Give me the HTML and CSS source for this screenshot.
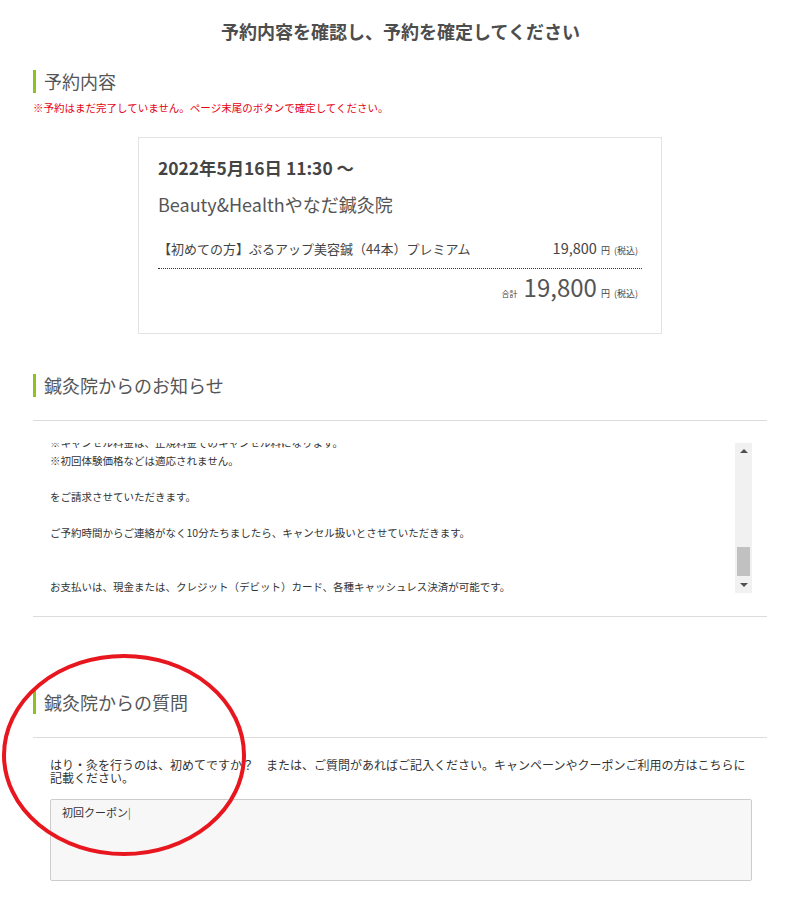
FILE: index.html
```html
<!DOCTYPE html>
<html lang="ja">
<head>
<meta charset="utf-8">
<title>予約内容を確認し、予約を確定してください</title>
<link rel="stylesheet" href="styles.css">
</head>
<body>
<div class="page">
  <h1 class="title">予約内容を確認し、予約を確定してください</h1>

  <h2 class="sec-head first">予約内容</h2>
  <p class="note">※予約はまだ完了していません。ページ末尾のボタンで確定してください。</p>

  <div class="card">
    <div class="date">2022年5月16日 11:30 ～</div>
    <div class="shop">Beauty&amp;Healthやなだ鍼灸院</div>
    <div class="item-row">
      <span class="item-name">【初めての方】ぷるアップ美容鍼（44本）プレミアム</span>
      <span class="item-price"><span class="num">19,800</span><span class="yen">円</span><span class="tax">(税込)</span></span>
    </div>
    <div class="total-row">
      <span class="total-label">合計</span><span class="total-num">19,800</span><span class="yen">円</span><span class="tax">(税込)</span>
    </div>
  </div>

  <h2 class="sec-head second">鍼灸院からのお知らせ</h2>
  <hr class="rule rule-a">
  <div class="notice">
    <div class="notice-view">
      <div class="notice-text">
        <p>※キャンセル料金は、正規料金でのキャンセル料になります。</p>
        <p>※初回体験価格などは適応されません。</p>
        <p>&nbsp;</p>
        <p>をご請求させていただきます。</p>
        <p>&nbsp;</p>
        <p>ご予約時間からご連絡がなく10分たちましたら、キャンセル扱いとさせていただきます。</p>
        <p>&nbsp;</p>
        <p>&nbsp;</p>
        <p>お支払いは、現金または、クレジット（デビット）カード、各種キャッシュレス決済が可能です。</p>
        <p>&nbsp;</p>
      </div>
    </div>
    <div class="scrollbar">
      <span class="arrow up"></span>
      <span class="track"><span class="thumb"></span></span>
      <span class="arrow down"></span>
    </div>
  </div>
  <hr class="rule rule-b">

  <h2 class="sec-head third">鍼灸院からの質問</h2>
  <hr class="rule rule-c">
  <p class="question">はり・灸を行うのは、初めてですか？　または、ご質問があればご記入ください。キャンペーンやクーポンご利用の方はこちらに記載ください。</p>
  <div class="answer">初回クーポン<span class="caret">|</span></div>

  <svg class="circle-mark" width="250" height="210" viewBox="0 0 250 210" aria-hidden="true">
    <ellipse cx="124" cy="102" rx="120" ry="99" fill="none" stroke="#e8161e" stroke-width="4"/>
  </svg>
</div>
</body>
</html>
```

FILE: styles.css
```css
* { box-sizing: border-box; }

html, body {
  margin: 0;
  padding: 0;
  background: #fff;
}

body {
  font-family: "Noto Sans CJK JP", "Noto Sans", sans-serif;
  color: #555;
}

.page {
  position: relative;
  width: 734px;
  margin: 0 0 0 33px;
  padding-top: 19px;
  padding-bottom: 20px;
}

.title {
  margin: 0 0 0 -31px;
  width: 797px;
  text-align: center;
  font-size: 18px;
  line-height: 24px;
  font-weight: 700;
  color: #4d4d4d;
}

.sec-head {
  margin: 0;
  border-left: 3px solid #8dc21f;
  padding-left: 8px;
  font-size: 18px;
  line-height: 23px;
  font-weight: 400;
  color: #555;
  height: 23px;
}

.sec-head.first { margin-top: 27px; }
.sec-head.second { margin-top: 40px; }
.sec-head.third { margin-top: 74px; }

.note {
  margin: 8px 0 0;
  font-size: 10.5px;
  line-height: 14px;
  color: #e60012;
}

.card {
  margin: 22px auto 0;
  width: 524px;
  border: 1px solid #e3e3e3;
  padding: 17px 19px 24px;
  color: #444;
}

.date {
  font-size: 17.4px;
  line-height: 26px;
  font-weight: 700;
}

.shop {
  margin-top: 10px;
  font-size: 18px;
  line-height: 26px;
  color: #555;
}

.item-row {
  margin-top: 21px;
  display: flex;
  justify-content: space-between;
  align-items: baseline;
  padding: 0 4px 7px 0;
  border-bottom: 1px dotted #333;
  font-size: 13px;
  line-height: 20px;
}

.item-name { color: #444; }

.num { font-size: 14.5px; }

.yen {
  font-size: 9px;
  margin-left: 4px;
}

.tax {
  font-size: 9px;
  margin-left: 4px;
}

.total-row {
  margin-top: 3px;
  display: flex;
  justify-content: flex-end;
  align-items: baseline;
  padding-right: 4px;
  line-height: 30px;
}

.total-label {
  font-size: 8px;
  margin-right: 6px;
}

.total-num {
  font-size: 24px;
  color: #555;
}

.rule {
  margin: 0;
  border: 0;
  border-top: 1px solid #dcdcdc;
  height: 0;
}

.rule-a { margin-top: 23px; }
.rule-b { margin-top: 23px; }
.rule-c { margin-top: 23px; }

.notice {
  margin: 22px 15px 0 17px;
  height: 150px;
  display: flex;
}

.notice-view {
  flex: 1;
  overflow: hidden;
}

.notice-text {
  margin-top: -9px;
  font-size: 10.5px;
  line-height: 18px;
  color: #333;
}

.notice-text p {
  margin: 0;
  white-space: nowrap;
}

.scrollbar {
  width: 17px;
  background: #f1f1f1;
  display: flex;
  flex-direction: column;
  align-items: center;
}

.arrow {
  width: 0;
  height: 0;
  border-left: 4px solid transparent;
  border-right: 4px solid transparent;
}

.arrow.up {
  margin-top: 6px;
  border-bottom: 4px solid #505050;
}

.arrow.down {
  margin-bottom: 6px;
  border-top: 4px solid #505050;
}

.track {
  flex: 1;
  width: 13px;
  display: flex;
  flex-direction: column;
  justify-content: flex-end;
  padding-bottom: 7px;
}

.thumb {
  height: 29px;
  background: #c1c1c1;
}

.question {
  margin: 20px 15px 0 17px;
  font-size: 12px;
  line-height: 13px;
  color: #333;
}

.answer {
  margin: 15px 15px 0 17px;
  height: 82px;
  background: #f7f7f7;
  border: 1px solid #cccccc;
  border-radius: 2px;
  padding: 4px 11px;
  font-size: 11px;
  line-height: 16px;
  color: #333;
}

.caret {
  font-weight: 300;
  color: #222;
}

.circle-mark {
  position: absolute;
  left: -33px;
  top: 653px;
}
```
